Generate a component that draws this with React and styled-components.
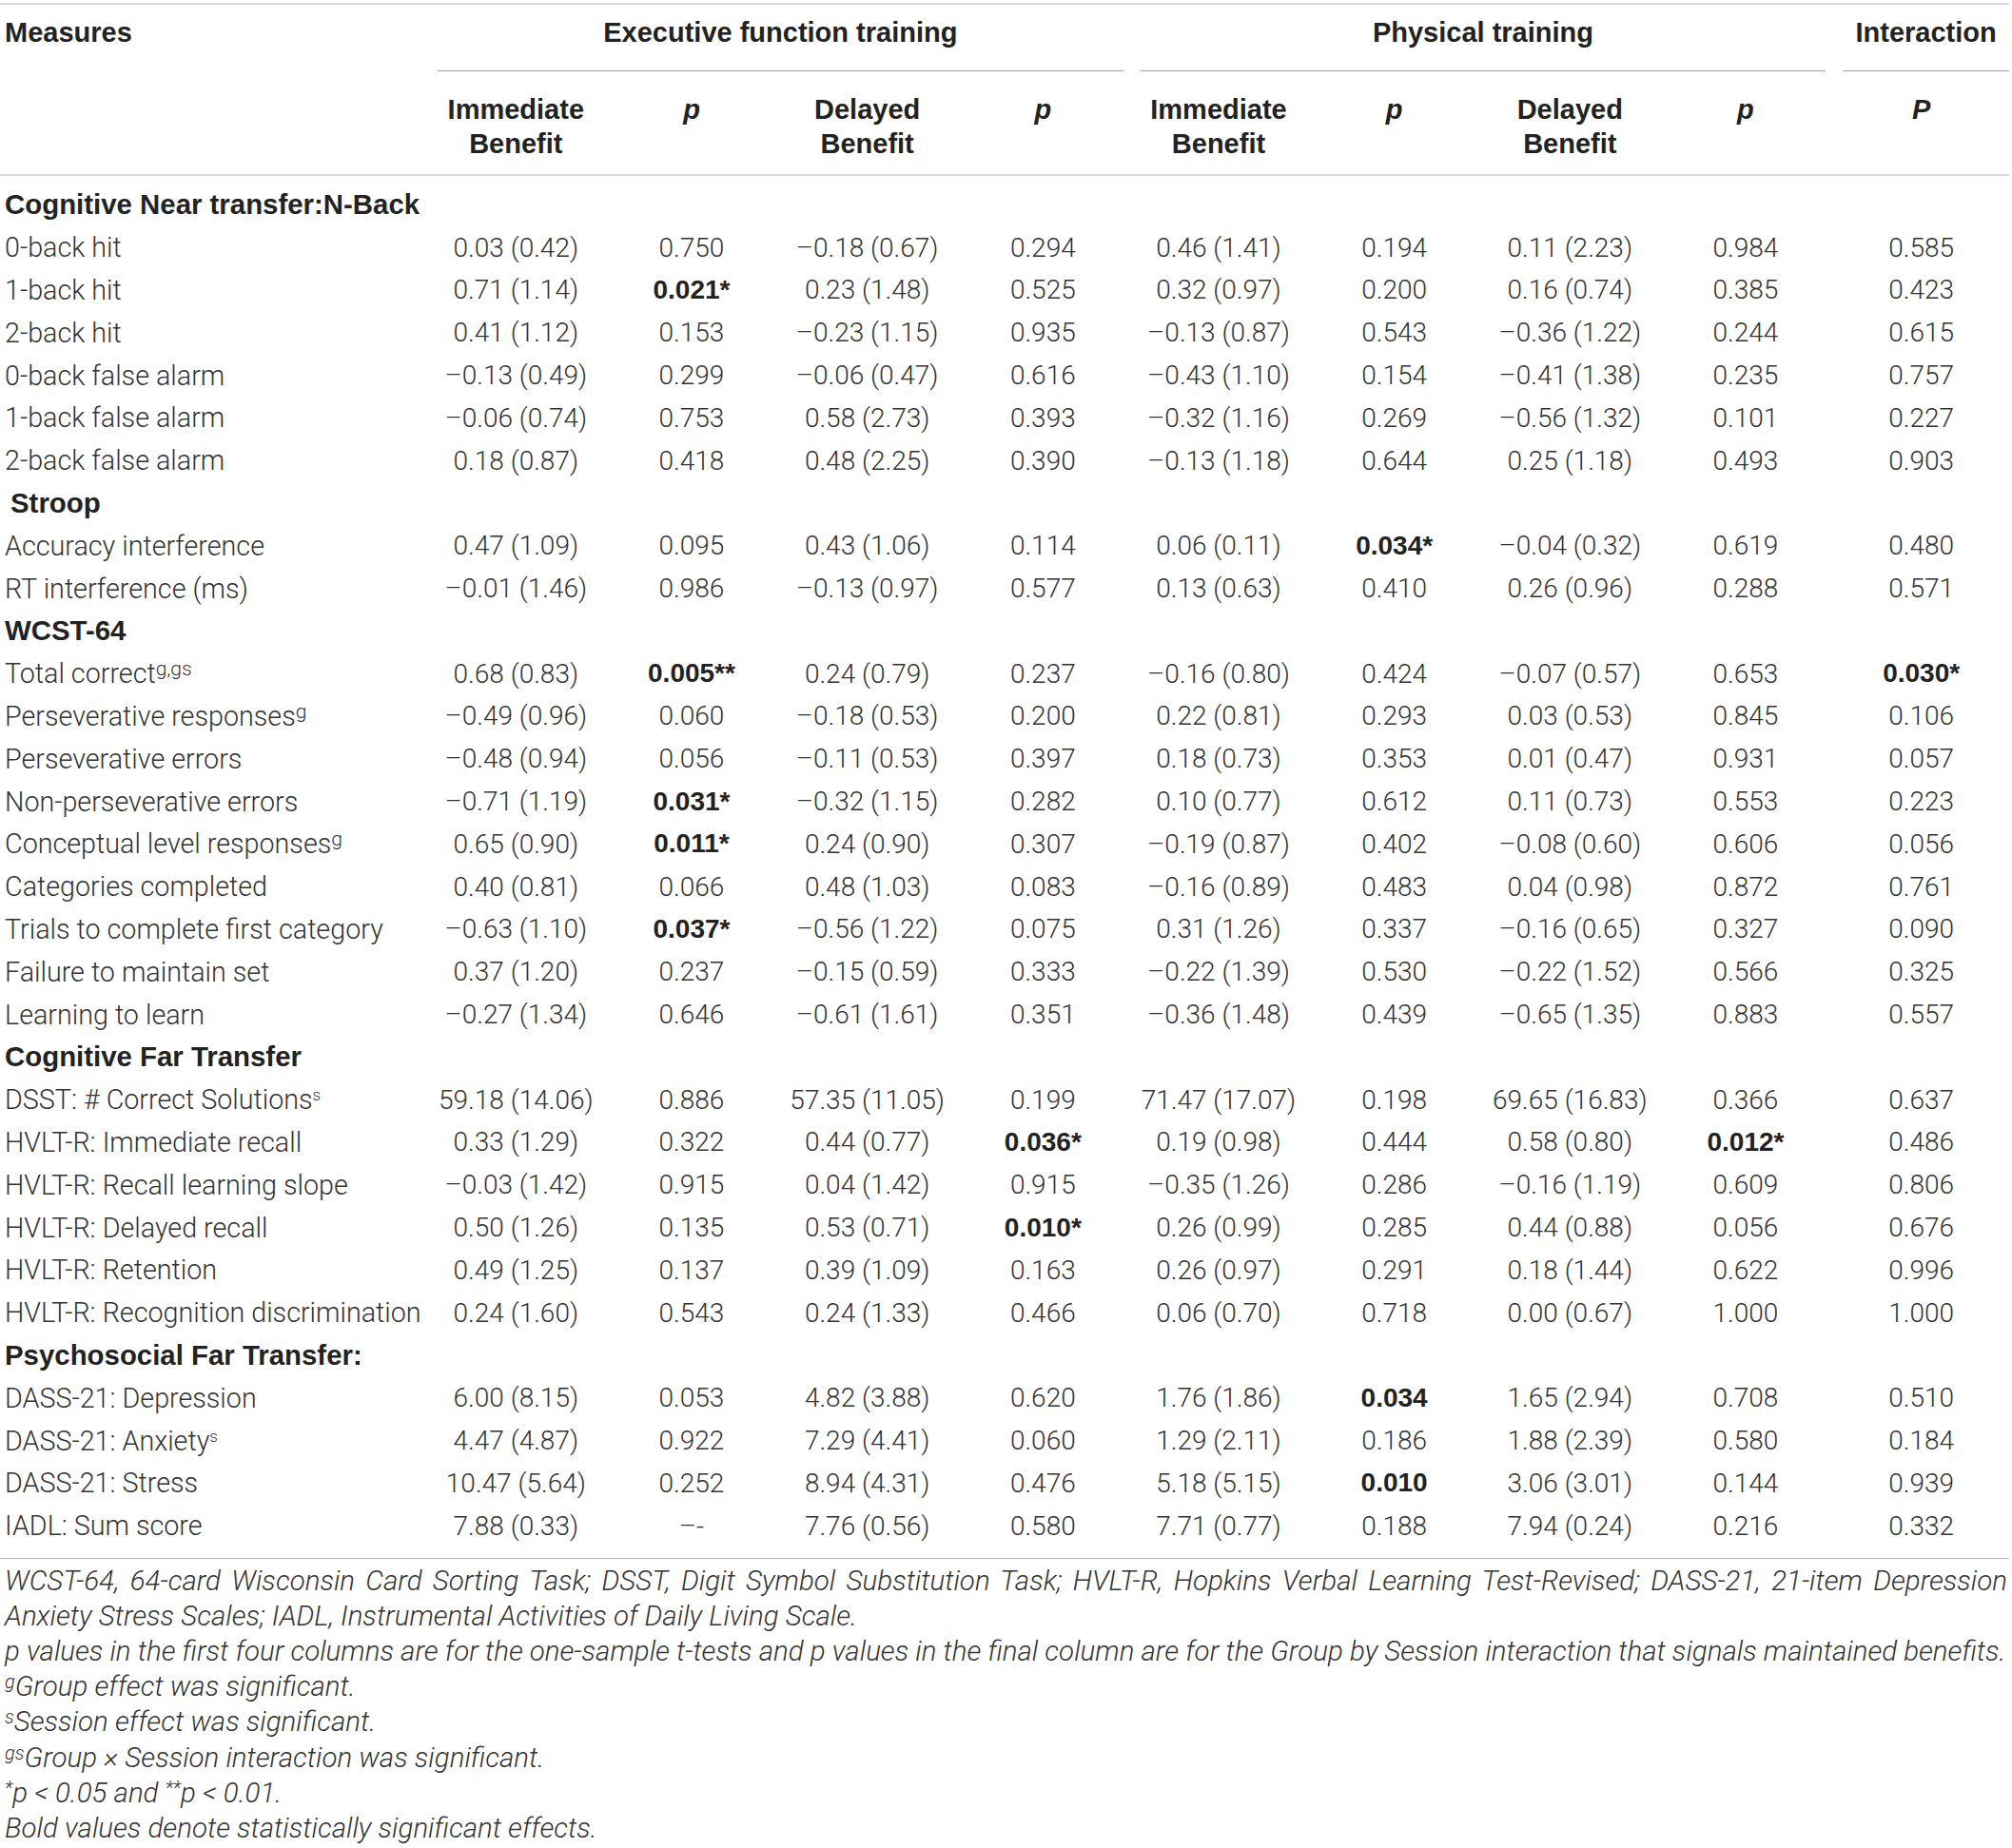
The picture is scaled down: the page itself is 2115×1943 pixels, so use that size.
import React from 'react'
import styled, { createGlobalStyle } from 'styled-components'

const GlobalStyle = createGlobalStyle`
  html, body {
    margin: 0;
    padding: 0;
    background: #ffffff;
  }
  body {
    font-family: Roboto, "Liberation Sans", Arial, sans-serif;
    color: #333333;
  }
`

const boldFont = `"Liberation Sans", Arial, Helvetica, sans-serif`

const Page = styled.div`
  width: 2115px;
  padding-top: 3px;
`

const Table = styled.table`
  width: 2112px;
  table-layout: fixed;
  border-collapse: collapse;
  border-spacing: 0;
  border-top: 2px solid #d9d9d9;
  font-size: 28px;
`

const GroupCell = styled.th`
  padding: 0 ${p => (p.$edge ? '0' : '8px')} 0 ${p => (p.$flush ? '0' : '10px')};
  vertical-align: top;
  font-family: ${boldFont};
  font-size: 29px;
  font-weight: 700;
  color: #222222;
`

const GroupLabel = styled.div`
  height: 58px;
  padding-bottom: 11px;
  display: flex;
  align-items: center;
  justify-content: ${p => (p.$left ? 'flex-start' : 'center')};
  border-bottom: 1px solid ${p => (p.$rule ? '#9d9d9d' : 'transparent')};
  padding-left: ${p => (p.$left ? '5px' : '0')};
`

const SubHeadRow = styled.tr`
  border-bottom: 2px solid #d6d6d6;
`

const SubCell = styled.th`
  padding: 22px 0 14px;
  line-height: 36px;
  vertical-align: top;
  text-align: center;
  font-family: ${boldFont};
  font-size: 29px;
  font-weight: 700;
  color: #222222;
  font-style: ${p => (p.$italic ? 'italic' : 'normal')};
`

const SectionCell = styled.td`
  height: 44.8px;
  padding: ${p => (p.$first ? '8px' : '0')} 0 0 ${p => (p.$indent ? '11px' : '5px')};
  font-family: ${boldFont};
  font-size: 29.4px;
  font-weight: 700;
  color: #222222;
  white-space: nowrap;
  vertical-align: middle;
`

const DataRow = styled.tr`
  border-bottom: ${p => (p.$last ? '1px solid #b4b4b4' : 'none')};
`

const LabelCell = styled.td`
  height: 44.8px;
  padding: 0 0 ${p => (p.$last ? '11px' : '0')} 5px;
  font-size: 28.7px;
  font-weight: 300;
  white-space: nowrap;
  vertical-align: middle;
`

const ValueCell = styled.td`
  padding: 0 0 ${p => (p.$last ? '11px' : '0')};
  text-align: center;
  white-space: nowrap;
  vertical-align: middle;
  font-family: ${p => (p.$bold ? boldFont : 'inherit')};
  font-weight: ${p => (p.$bold ? 700 : 300)};
  color: ${p => (p.$bold ? '#222222' : '#333333')};
`

const Sup = styled.sup`
  font-size: ${p => (p.$small ? 17 : 21)}px;
  line-height: 0;
  vertical-align: ${p => (p.$small ? '0.55em' : '0.4em')};
  font-weight: inherit;
`

const Notes = styled.div`
  width: 2110px;
  margin-top: 5px;
  font-size: 29.5px;
  line-height: 37.2px;
  font-style: italic;
  font-weight: 300;
  color: #333333;
`

const NoteLine = styled.div`
  padding-left: 5px;
  text-align: ${p => (p.$justify ? 'justify' : 'left')};
  text-align-last: ${p => (p.$justify ? 'justify' : 'auto')};
`

const NoteSup = styled.sup`
  font-size: 20px;
  line-height: 0;
  vertical-align: 0.42em;
`

const colWidths = [450, ...Array(9).fill(184.67)]

const sections = [
  {
    title: 'Cognitive Near transfer:N-Back',
    rows: [
      ['0-back hit', '0.03 (0.42)', '0.750', '–0.18 (0.67)', '0.294', '0.46 (1.41)', '0.194', '0.11 (2.23)', '0.984', '0.585'],
      ['1-back hit', '0.71 (1.14)', 'b:0.021*', '0.23 (1.48)', '0.525', '0.32 (0.97)', '0.200', '0.16 (0.74)', '0.385', '0.423'],
      ['2-back hit', '0.41 (1.12)', '0.153', '–0.23 (1.15)', '0.935', '–0.13 (0.87)', '0.543', '–0.36 (1.22)', '0.244', '0.615'],
      ['0-back false alarm', '–0.13 (0.49)', '0.299', '–0.06 (0.47)', '0.616', '–0.43 (1.10)', '0.154', '–0.41 (1.38)', '0.235', '0.757'],
      ['1-back false alarm', '–0.06 (0.74)', '0.753', '0.58 (2.73)', '0.393', '–0.32 (1.16)', '0.269', '–0.56 (1.32)', '0.101', '0.227'],
      ['2-back false alarm', '0.18 (0.87)', '0.418', '0.48 (2.25)', '0.390', '–0.13 (1.18)', '0.644', '0.25 (1.18)', '0.493', '0.903'],
    ],
  },
  {
    title: 'Stroop',
    indent: true,
    rows: [
      ['Accuracy interference', '0.47 (1.09)', '0.095', '0.43 (1.06)', '0.114', '0.06 (0.11)', 'b:0.034*', '–0.04 (0.32)', '0.619', '0.480'],
      ['RT interference (ms)', '–0.01 (1.46)', '0.986', '–0.13 (0.97)', '0.577', '0.13 (0.63)', '0.410', '0.26 (0.96)', '0.288', '0.571'],
    ],
  },
  {
    title: 'WCST-64',
    rows: [
      [['Total correct', 'g,gs'], '0.68 (0.83)', 'b:0.005**', '0.24 (0.79)', '0.237', '–0.16 (0.80)', '0.424', '–0.07 (0.57)', '0.653', 'b:0.030*'],
      [['Perseverative responses', 'g'], '–0.49 (0.96)', '0.060', '–0.18 (0.53)', '0.200', '0.22 (0.81)', '0.293', '0.03 (0.53)', '0.845', '0.106'],
      ['Perseverative errors', '–0.48 (0.94)', '0.056', '–0.11 (0.53)', '0.397', '0.18 (0.73)', '0.353', '0.01 (0.47)', '0.931', '0.057'],
      ['Non-perseverative errors', '–0.71 (1.19)', 'b:0.031*', '–0.32 (1.15)', '0.282', '0.10 (0.77)', '0.612', '0.11 (0.73)', '0.553', '0.223'],
      [['Conceptual level responses', 'g'], '0.65 (0.90)', 'b:0.011*', '0.24 (0.90)', '0.307', '–0.19 (0.87)', '0.402', '–0.08 (0.60)', '0.606', '0.056'],
      ['Categories completed', '0.40 (0.81)', '0.066', '0.48 (1.03)', '0.083', '–0.16 (0.89)', '0.483', '0.04 (0.98)', '0.872', '0.761'],
      ['Trials to complete first category', '–0.63 (1.10)', 'b:0.037*', '–0.56 (1.22)', '0.075', '0.31 (1.26)', '0.337', '–0.16 (0.65)', '0.327', '0.090'],
      ['Failure to maintain set', '0.37 (1.20)', '0.237', '–0.15 (0.59)', '0.333', '–0.22 (1.39)', '0.530', '–0.22 (1.52)', '0.566', '0.325'],
      ['Learning to learn', '–0.27 (1.34)', '0.646', '–0.61 (1.61)', '0.351', '–0.36 (1.48)', '0.439', '–0.65 (1.35)', '0.883', '0.557'],
    ],
  },
  {
    title: 'Cognitive Far Transfer',
    rows: [
      [['DSST: # Correct Solutions', 's', true], '59.18 (14.06)', '0.886', '57.35 (11.05)', '0.199', '71.47 (17.07)', '0.198', '69.65 (16.83)', '0.366', '0.637'],
      ['HVLT-R: Immediate recall', '0.33 (1.29)', '0.322', '0.44 (0.77)', 'b:0.036*', '0.19 (0.98)', '0.444', '0.58 (0.80)', 'b:0.012*', '0.486'],
      ['HVLT-R: Recall learning slope', '–0.03 (1.42)', '0.915', '0.04 (1.42)', '0.915', '–0.35 (1.26)', '0.286', '–0.16 (1.19)', '0.609', '0.806'],
      ['HVLT-R: Delayed recall', '0.50 (1.26)', '0.135', '0.53 (0.71)', 'b:0.010*', '0.26 (0.99)', '0.285', '0.44 (0.88)', '0.056', '0.676'],
      ['HVLT-R: Retention', '0.49 (1.25)', '0.137', '0.39 (1.09)', '0.163', '0.26 (0.97)', '0.291', '0.18 (1.44)', '0.622', '0.996'],
      ['HVLT-R: Recognition discrimination', '0.24 (1.60)', '0.543', '0.24 (1.33)', '0.466', '0.06 (0.70)', '0.718', '0.00 (0.67)', '1.000', '1.000'],
    ],
  },
  {
    title: 'Psychosocial Far Transfer:',
    rows: [
      ['DASS-21: Depression', '6.00 (8.15)', '0.053', '4.82 (3.88)', '0.620', '1.76 (1.86)', 'b:0.034', '1.65 (2.94)', '0.708', '0.510'],
      [['DASS-21: Anxiety', 's', true], '4.47 (4.87)', '0.922', '7.29 (4.41)', '0.060', '1.29 (2.11)', '0.186', '1.88 (2.39)', '0.580', '0.184'],
      ['DASS-21: Stress', '10.47 (5.64)', '0.252', '8.94 (4.31)', '0.476', '5.18 (5.15)', 'b:0.010', '3.06 (3.01)', '0.144', '0.939'],
      ['IADL: Sum score', '7.88 (0.33)', '–-', '7.76 (0.56)', '0.580', '7.71 (0.77)', '0.188', '7.94 (0.24)', '0.216', '0.332'],
    ],
  },
]

const subHeads = [
  ['Immediate', 'Benefit'],
  ['p'],
  ['Delayed', 'Benefit'],
  ['p'],
  ['Immediate', 'Benefit'],
  ['p'],
  ['Delayed', 'Benefit'],
  ['p'],
  ['P'],
]

const Label = ({ value }) => {
  if (Array.isArray(value)) {
    return (
      <>
        {value[0]}
        <Sup $small={value[2]}>{value[1]}</Sup>
      </>
    )
  }
  return value
}

export default function App() {
  const lastSection = sections.length - 1
  return (
    <Page>
      <GlobalStyle />
      <Table>
        <colgroup>
          {colWidths.map((w, i) => (
            <col key={i} style={{ width: w }} />
          ))}
        </colgroup>
        <thead>
          <tr>
            <GroupCell $flush $edge>
              <GroupLabel $left>Measures</GroupLabel>
            </GroupCell>
            <GroupCell colSpan={4}>
              <GroupLabel $rule>Executive function training</GroupLabel>
            </GroupCell>
            <GroupCell colSpan={4}>
              <GroupLabel $rule>Physical training</GroupLabel>
            </GroupCell>
            <GroupCell $edge>
              <GroupLabel $rule>Interaction</GroupLabel>
            </GroupCell>
          </tr>
          <SubHeadRow>
            <SubCell />
            {subHeads.map((h, i) => (
              <SubCell key={i} $italic={h.length === 1}>
                {h[0]}
                {h[1] && <br />}
                {h[1]}
              </SubCell>
            ))}
          </SubHeadRow>
        </thead>
        <tbody>
          {sections.map((s, si) => (
            <React.Fragment key={s.title}>
              <tr>
                <SectionCell colSpan={10} $first={si === 0} $indent={s.indent}>
                  {s.title}
                </SectionCell>
              </tr>
              {s.rows.map((r, ri) => {
                const last = si === lastSection && ri === s.rows.length - 1
                return (
                  <DataRow key={ri} $last={last}>
                    <LabelCell $last={last}>
                      <Label value={r[0]} />
                    </LabelCell>
                    {r.slice(1).map((v, vi) => {
                      const bold = v.startsWith('b:')
                      return (
                        <ValueCell key={vi} $bold={bold} $last={last}>
                          {bold ? v.slice(2) : v}
                        </ValueCell>
                      )
                    })}
                  </DataRow>
                )
              })}
            </React.Fragment>
          ))}
        </tbody>
      </Table>
      <Notes>
        <NoteLine $justify>
          WCST-64, 64-card Wisconsin Card Sorting Task; DSST, Digit Symbol Substitution Task; HVLT-R, Hopkins Verbal Learning Test-Revised; DASS-21, 21-item Depression
        </NoteLine>
        <NoteLine>Anxiety Stress Scales; IADL, Instrumental Activities of Daily Living Scale.</NoteLine>
        <NoteLine>
          p values in the first four columns are for the one-sample t-tests and p values in the final column are for the Group by Session interaction that signals maintained benefits.
        </NoteLine>
        <NoteLine>
          <NoteSup>g</NoteSup>Group effect was significant.
        </NoteLine>
        <NoteLine>
          <NoteSup>s</NoteSup>Session effect was significant.
        </NoteLine>
        <NoteLine>
          <NoteSup>gs</NoteSup>Group × Session interaction was significant.
        </NoteLine>
        <NoteLine>
          <NoteSup>*</NoteSup>p &lt; 0.05 and <NoteSup>**</NoteSup>p &lt; 0.01.
        </NoteLine>
        <NoteLine>Bold values denote statistically significant effects.</NoteLine>
      </Notes>
    </Page>
  )
}
